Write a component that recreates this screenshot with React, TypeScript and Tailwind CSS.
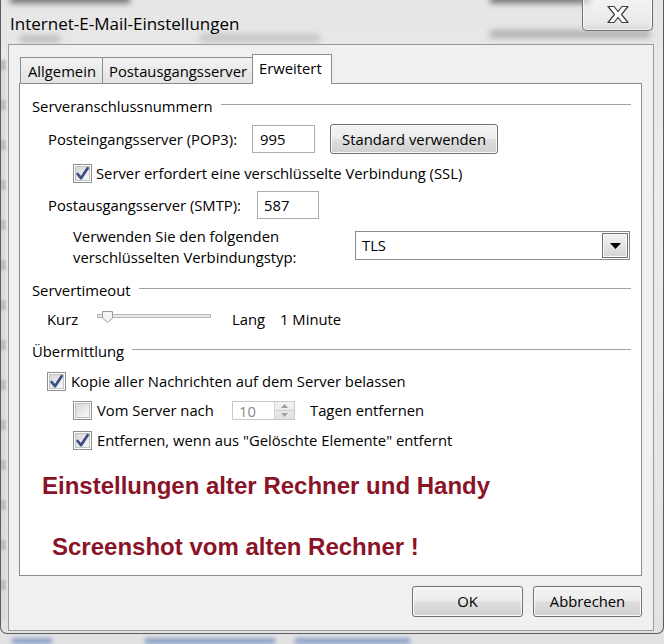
import React from "react";

const CheckBox = ({ checked }: { checked: boolean }) => (
  <svg width="19" height="19" viewBox="0 0 19 19" className="shrink-0">
    <defs>
      <linearGradient id="cbg" x1="0" y1="0" x2="1" y2="1">
        <stop offset="0" stopColor="#d6d6d6" />
        <stop offset="1" stopColor="#fafafa" />
      </linearGradient>
    </defs>
    <rect x="0.5" y="0.5" width="18" height="18" fill="#ffffff" stroke="#8e8f8f" />
    <rect x="2.5" y="2.5" width="14" height="14" fill="url(#cbg)" stroke="#c2c2c2" />
    {checked && (
      <path
        d="M4.6 10 L8 14.2 L14.6 4.2"
        fill="none"
        stroke="#3b4d85"
        strokeWidth="2.7"
        strokeLinecap="round"
        strokeLinejoin="round"
      />
    )}
  </svg>
);

const Group = ({ title, className = "" }: { title: string; className?: string }) => (
  <div className={"flex items-center h-[20px] pr-[10px] " + className}>
    <span className="whitespace-nowrap">{title}</span>
    <div className="flex-1 ml-[8px] h-px bg-[#a3a3a3] -mt-[3px]" />
  </div>
);

const btnCls =
  "flex items-center justify-center rounded-[3px] border border-[#707070] bg-[linear-gradient(to_bottom,#f4f4f4_0%,#ececec_48%,#dedede_52%,#d0d0d0_100%)] shadow-[inset_0_0_0_1px_#fbfbfb]";

export default function App() {
  return (
    <div className="w-[664px] h-[644px] overflow-hidden relative bg-[#d8d8d8] font-['Open_Sans',sans-serif] text-[14.8px] text-black">
      {/* blurred background behind the glass frame */}
      <div className="absolute inset-0 pointer-events-none">
        <div className="absolute left-0 top-0 w-[664px] h-[644px] bg-[linear-gradient(to_bottom,#e6e6e6,#ececec_30%,#e2e2e2)]" />
        <div className="absolute left-[10px] top-[-5px] w-[120px] h-[8px] bg-[#6a6a6a] blur-[3px]" />
        <div className="absolute left-[490px] top-[-5px] w-[100px] h-[8px] bg-[#6a6a6a] blur-[3px]" />
        <div className="absolute left-[20px] top-[36px] w-[40px] h-[6px] bg-[#b4b4b4] blur-[3px]" />
        <div className="absolute left-[200px] top-[34px] w-[120px] h-[8px] bg-[#c4c4c4] blur-[3px]" />
        <div className="absolute left-[490px] top-[30px] w-[160px] h-[8px] bg-[#b0b0b0] blur-[3px]" />
        <div className="absolute left-[0px] top-[60px] w-[6px] h-[560px] bg-[repeating-linear-gradient(to_bottom,#bcbcbc_0px,#bcbcbc_10px,#dadada_10px,#dadada_40px)] blur-[1px]" />
        <div className="absolute left-[12px] top-[638px] w-[40px] h-[6px] bg-[#8da2c8] blur-[2px]" />
        <div className="absolute left-[145px] top-[638px] w-[130px] h-[6px] bg-[#8da2c8] blur-[2px]" />
        <div className="absolute left-[295px] top-[638px] w-[115px] h-[6px] bg-[#8da2c8] blur-[2px]" />
      </div>

      {/* window */}
      <div className="relative h-[634px] border-l border-r border-b border-[#5c5c5c] rounded-b-[7px] flex flex-col">
        {/* title bar */}
        <div className="h-[44px] flex items-start justify-between shrink-0">
          <div className="pl-[9px] pt-[11px] text-[17px] text-black">Internet-E-Mail-Einstellungen</div>
          <div className="mr-[10px] -mt-px w-[71px] h-[32px] rounded-b-[5px] border border-[#6e6e6e] border-t-0 bg-[linear-gradient(to_bottom,rgba(255,255,255,0.55),rgba(225,225,225,0.35))] shadow-[inset_0_0_0_1px_rgba(255,255,255,0.7)] flex items-center justify-center">
            <svg width="24" height="19" viewBox="0 0 24 19">
              <path
                d="M2 1.5 H8 L12 6.5 L16 1.5 H22 L15.5 9.5 L22 17.5 H16 L12 12.5 L8 17.5 H2 L8.5 9.5 Z"
                fill="#ffffff"
                stroke="#3e3e3e"
                strokeWidth="1.2"
                strokeLinejoin="round"
              />
            </svg>
          </div>
        </div>

        {/* client area */}
        <div className="ml-[7px] mr-[9px] h-[587px] border border-[#9a9a9a] bg-[#f0f0f0] flex flex-col">
          {/* tabs */}
          <div className="flex items-end h-[38px] pt-[9px] pl-[11px]">
            <div className="w-[83px] h-[26px] border border-b-0 border-[#898c95] bg-[linear-gradient(to_bottom,#f2f2f2,#e3e3e3)] flex items-center pl-[7px] pt-[1px]">
              Allgemein
            </div>
            <div className="-ml-px w-[151px] h-[26px] border border-b-0 border-[#898c95] bg-[linear-gradient(to_bottom,#f2f2f2,#e3e3e3)] flex items-center pl-[6px] pt-[1px]">
              Postausgangsserver
            </div>
            <div className="-ml-px w-[80px] h-[30px] border border-b-0 border-[#898c95] bg-white relative z-10 -mb-px flex items-start pl-[6px] pt-[2px]">
              Erweitert
            </div>
          </div>

          {/* panel */}
          <div className="ml-[10px] w-[623px] h-[493px] border border-[#898c95] bg-white flex flex-col pl-[12px]">
            <Group title="Serveranschlussnummern" className="mt-[12px]" />

            <div className="mt-[8px] h-[30px] flex items-center">
              <div className="w-[220px] pl-[16px]">Posteingangsserver (POP3):</div>
              <div className="w-[63px] h-[28px] border border-[#abadb3] flex items-center pl-[7px]">995</div>
              <div className={btnCls + " ml-[15px] w-[168px] h-[30px]"}>Standard verwenden</div>
            </div>

            <div className="mt-[9px] h-[20px] flex items-center pl-[41px]">
              <CheckBox checked />
              <span className="ml-[4px]">Server erfordert eine verschlüsselte Verbindung (SSL)</span>
            </div>

            <div className="mt-[8px] h-[28px] flex items-center">
              <div className="w-[225px] pl-[16px]">Postausgangsserver (SMTP):</div>
              <div className="w-[62px] h-[28px] border border-[#abadb3] flex items-center pl-[6px]">587</div>
            </div>

            <div className="mt-[7px] flex items-start">
              <div className="w-[323px] pl-[41px] leading-[21px]">
                Verwenden Sie den folgenden
                <br />
                verschlüsselten Verbindungstyp:
              </div>
              <div className="mt-[5px] w-[275px] h-[29px] border border-[#8a8a8a] flex items-center justify-between pl-[6px] pr-[1px]">
                <span>TLS</span>
                <div className="w-[26px] h-[25px] border border-[#707070] bg-[linear-gradient(to_bottom,#f4f4f4,#d4d4d4)] shadow-[inset_0_0_0_1px_#fafafa] flex items-center justify-center">
                  <svg width="11" height="6" viewBox="0 0 11 6">
                    <path d="M0 0 H11 L5.5 6 Z" fill="#000" />
                  </svg>
                </div>
              </div>
            </div>

            <Group title="Servertimeout" className="mt-[12px]" />

            <div className="mt-[9px] h-[20px] flex items-center pl-[15px]">
              <span className="w-[50px]">Kurz</span>
              <div className="relative w-[114px] h-[4px] border border-[#b6b6b6] bg-[#e9e9e9] -mt-[6px]">
                <svg className="absolute left-[4px] top-[-4px]" width="11" height="12" viewBox="0 0 11 12">
                  <path d="M0.5 0.5 H10.5 V7 L5.5 11.5 L0.5 7 Z" fill="#f4f4f4" stroke="#9a9a9a" />
                </svg>
              </div>
              <span className="ml-[21px]">Lang</span>
              <span className="ml-[15px]">1 Minute</span>
            </div>

            <Group title="Übermittlung" className="mt-[12px]" />

            <div className="mt-[10px] h-[20px] flex items-center pl-[15px]">
              <CheckBox checked />
              <span className="ml-[5px]">Kopie aller Nachrichten auf dem Server belassen</span>
            </div>

            <div className="mt-[9px] h-[20px] flex items-center pl-[41px]">
              <CheckBox checked={false} />
              <span className="ml-[5px] w-[135px]">Vom Server nach</span>
              <div className="w-[63px] h-[19px] border border-[#c9c9c9] flex items-center justify-between pl-[6px] text-[#8a8a8a]">
                <span className="mt-[3px]">10</span>
                <div className="w-[20px] h-[17px] flex flex-col border-l border-[#d4d4d4] bg-[linear-gradient(to_bottom,#f3f3f3,#e0e0e0)]">
                  <div className="flex-1 flex items-center justify-center border-b border-[#d0d0d0]">
                    <svg width="7" height="4" viewBox="0 0 7 4"><path d="M0 4 L3.5 0 L7 4 Z" fill="#a0a0a0" /></svg>
                  </div>
                  <div className="flex-1 flex items-center justify-center">
                    <svg width="7" height="4" viewBox="0 0 7 4"><path d="M0 0 H7 L3.5 4 Z" fill="#a0a0a0" /></svg>
                  </div>
                </div>
              </div>
              <span className="ml-[15px]">Tagen entfernen</span>
            </div>

            <div className="mt-[10px] h-[20px] flex items-center pl-[41px]">
              <CheckBox checked />
              <span className="ml-[5px]">Entfernen, wenn aus "Gelöschte Elemente" entfernt</span>
            </div>

            <div className="mt-[22px] h-[28px] flex items-center pl-[10px] font-['Liberation_Sans',Arial,sans-serif] font-bold text-[24px] text-[#8a1328]">
              Einstellungen alter Rechner und Handy
            </div>

            <div className="mt-[33px] h-[28px] flex items-center pl-[20px] font-['Liberation_Sans',Arial,sans-serif] font-bold text-[24px] text-[#8a1328]">
              Screenshot vom alten Rechner !
            </div>
          </div>

          {/* buttons */}
          <div className="flex justify-end pr-[11px] mt-[10px]">
            <div className={btnCls + " w-[111px] h-[31px]"}>OK</div>
            <div className={btnCls + " ml-[10px] w-[109px] h-[31px]"}>Abbrechen</div>
          </div>
        </div>
      </div>
    </div>
  );
}
